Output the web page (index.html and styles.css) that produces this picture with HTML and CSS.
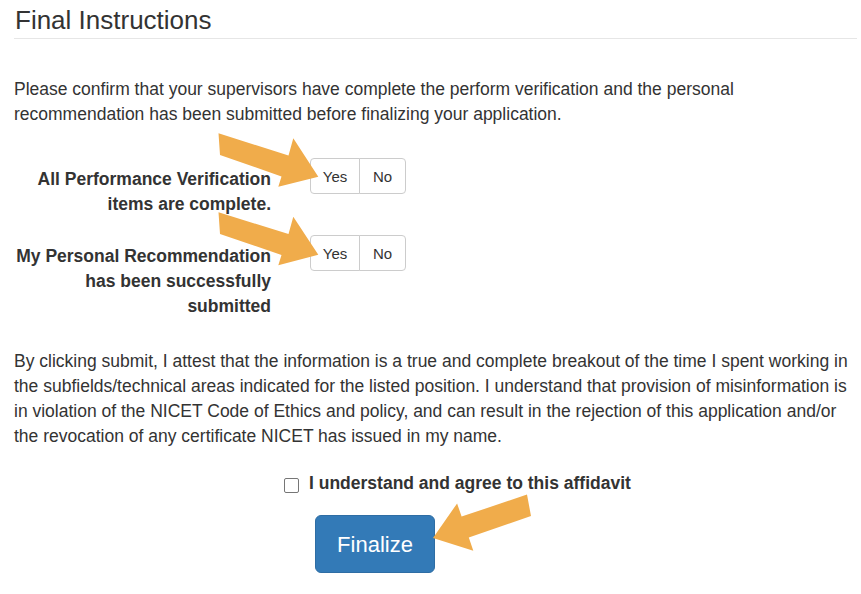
FILE: index.html
```html
<!DOCTYPE html>
<html>
<head>
<meta charset="utf-8">
<link rel="stylesheet" href="styles.css">
</head>
<body>
<div class="page">
  <h2 class="title">Final Instructions</h2>
  <p class="intro">Please confirm that your supervisors have complete the perform verification and the personal recommendation has been submitted before finalizing your application.</p>

  <div class="row row-first">
    <div class="label">All Performance Verification items are complete.</div>
    <div class="btn-group">
      <span class="seg seg-yes">Yes</span><span class="seg seg-no">No</span>
    </div>
  </div>
  <div class="row">
    <div class="label">My Personal Recommendation has been successfully submitted</div>
    <div class="btn-group">
      <span class="seg seg-yes">Yes</span><span class="seg seg-no">No</span>
    </div>
  </div>

  <p class="affidavit">By clicking submit, I attest that the information is a true and complete breakout of the time I spent working in the subfields/technical areas indicated for the listed position. I understand that provision of misinformation is in violation of the NICET Code of Ethics and policy, and can result in the rejection of this application and/or the revocation of any certificate NICET has issued in my name.</p>

  <label class="agree"><input type="checkbox" class="check"><span>I understand and agree to this affidavit</span></label>

  <div class="actions"><button class="finalize">Finalize</button></div>
</div>

<svg class="arrows" width="861" height="594" viewBox="0 0 861 594">
  <polygon points="218.5,133.3 288.5,155.6 293.3,138.3 318.3,176.7 278.3,186.7 281.5,176.4 220,155"/>
  <polygon points="218.5,212.3 288.5,234.1 293.3,216.8 318.3,254.7 278.3,265.2 281.5,254.9 220,234"/>
  <polygon points="527,494.6 461.6,516.6 457.1,503.4 433,538 473.3,550.7 468.8,537.4 531,516"/>
</svg>
</body>
</html>
```

FILE: styles.css
```css
html, body {
  margin: 0;
  padding: 0;
  background: #ffffff;
}
body {
  position: relative;
  width: 861px;
  height: 594px;
  overflow: hidden;
  font-family: "Liberation Sans", Arial, sans-serif;
  color: #333333;
  font-size: 17.5px;
  line-height: 25px;
}
.page {
  padding-left: 14px;
  width: 843px;
  display: flex;
  flex-direction: column;
}
.title {
  margin: 0;
  padding: 6px 0 4px 1px;
  font-size: 26px;
  line-height: 28px;
  font-weight: normal;
  border-bottom: 1px solid #e6e6e6;
}
.intro {
  margin: 38px 0 0 0;
}
.row {
  display: flex;
  align-items: flex-start;
  margin-left: -2px;
}
.row-first {
  margin-top: 31px;
  margin-bottom: 18.5px;
}
.label {
  width: 259px;
  padding-top: 8.5px;
  text-align: right;
  font-weight: bold;
}
.btn-group {
  display: flex;
  margin-left: 39px;
}
.seg {
  box-sizing: border-box;
  height: 36px;
  display: flex;
  align-items: center;
  justify-content: center;
  padding-top: 2px;
  font-size: 15px;
  line-height: 20px;
  color: #333;
  background: #fff;
  border: 1px solid #cccccc;
}
.seg-yes {
  width: 50px;
  border-radius: 4px 0 0 4px;
}
.seg-no {
  width: 47px;
  margin-left: -1px;
  border-radius: 0 4px 4px 0;
}
.affidavit {
  margin: 30px 0 0 0;
}
.agree {
  display: flex;
  align-items: flex-start;
  margin: 22px 0 0 270px;
  font-weight: bold;
}
.check {
  appearance: none;
  -webkit-appearance: none;
  box-sizing: border-box;
  width: 15px;
  height: 15px;
  margin: 7px 10px 0 0;
  border: 1px solid #767676;
  border-radius: 2px;
  background: #fff;
  flex: none;
}
.actions {
  display: flex;
  margin: 19px 0 0 301px;
}
.finalize {
  box-sizing: border-box;
  width: 120px;
  height: 58px;
  padding: 0;
  padding-top: 1px;
  font-family: "Liberation Sans", Arial, sans-serif;
  font-size: 22px;
  line-height: 29px;
  color: #ffffff;
  background: #337ab7;
  border: 1px solid #2e6da4;
  border-radius: 6px;
}
.arrows {
  position: absolute;
  top: 0;
  left: 0;
  pointer-events: none;
}
.arrows polygon {
  fill: #f0ac4b;
}
```
